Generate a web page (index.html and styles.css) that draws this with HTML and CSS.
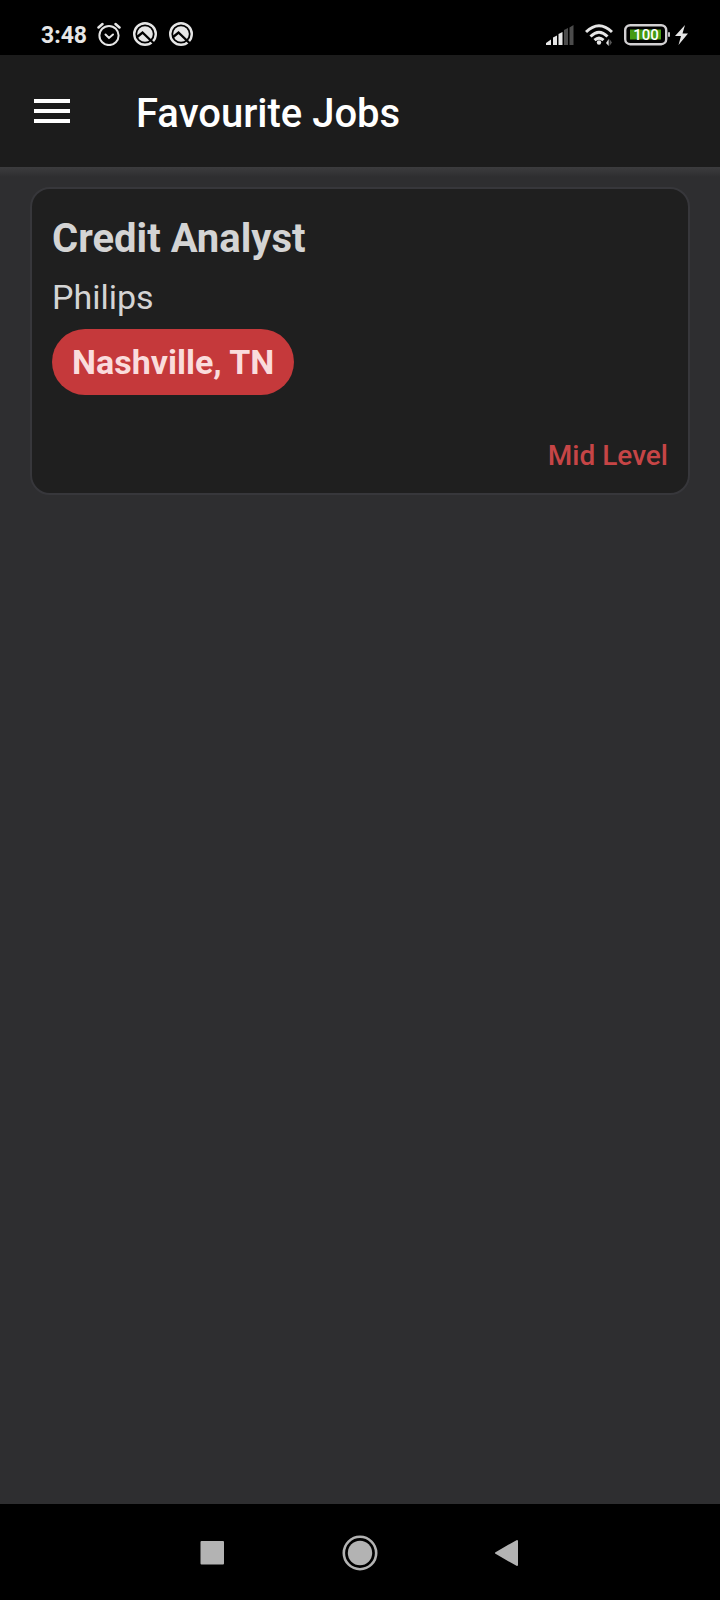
FILE: index.html
```html
<!DOCTYPE html>
<html lang="en">
<head>
<meta charset="utf-8">
<meta name="viewport" content="width=device-width, initial-scale=1">
<title>Favourite Jobs</title>
<link rel="stylesheet" href="styles.css">
</head>
<body>
<div class="screen">
  <div class="status">
    <div class="status-group">
      <span class="clock">3:48</span>
      <svg width="24" height="24" viewBox="0 0 24 24" fill="none" stroke="#e6e6e6" stroke-width="2" stroke-linecap="round"><circle cx="12" cy="13.500" r="9.600"/><path d="M8.500 12.500l3.500 3.500 4-3.500"/><path d="M1.500 5.500l4-3.500M22.500 5.500l-4-3.500" stroke-width="2.500"/></svg>
      <svg width="24" height="24" viewBox="0 0 24 24"><use href="#assist"/></svg>
      <svg width="24" height="24" viewBox="0 0 24 24"><g id="assist"><circle cx="12" cy="12" r="10.800" fill="none" stroke="#e6e6e6" stroke-width="2.400"/><circle cx="12" cy="12" r="7.800" fill="#e6e6e6"/><path d="M3.500 15.500L9.500 10.500 21.500 22" fill="none" stroke="#000" stroke-width="2.400"/></g></svg>
    </div>
    <div class="status-group status-right">
      <svg width="28" height="20" viewBox="0 0 28 20" fill="#e6e6e6"><path d="M0 20v-2l5-3.500V20zM7 12.500l4-2V20H7zM12.500 9l4-2v13h-4z"/><path d="M18 5l4-2v17h-4zM23.500 2.500L27.500 0v20h-4z" fill="#4c4c4c"/></svg>
      <svg width="28" height="22" viewBox="0 0 28 22" fill="none" stroke="#e6e6e6" stroke-width="3"><path d="M1 8Q14-4.500 27 8M5.500 12.500Q14 4 22.500 12.500M9.500 16.200Q14 12 18.500 16.200"/><circle cx="14" cy="18.500" r="2.200" fill="#e6e6e6" stroke="none"/><path d="M21 19l2.700-4v7z" fill="#e6e6e6" stroke="none"/><path d="M24.500 15v7l2.500-3.500z" fill="#555" stroke="none"/></svg>
      <svg class="battery" width="46" height="22" viewBox="0 0 46 22"><rect x="1.200" y="1.200" width="41" height="19" rx="5" fill="none" stroke="#d2d0d2" stroke-width="2.400"/><rect x="6" y="5.500" width="31" height="10" fill="#459a12"/><rect x="44" y="8" width="2" height="5" rx="1" fill="#c4c4c4"/><text x="22" y="16" text-anchor="middle" class="charge">100</text></svg>
      <svg class="bolt" width="14" height="20" viewBox="0 0 14 20" fill="#e6e6e6"><path d="M10 0L0 11h6L3.500 20 13 8.500H7.500z"/></svg>
    </div>
  </div>
  <header class="appbar">
    <button class="menu" type="button" aria-label="Open menu"><svg width="36" height="24" viewBox="0 0 36 24" fill="#fff"><path d="M0 0h36v4H0zM0 10h36v4H0zM0 20h36v4H0z"/></svg></button>
    <h1 class="title">Favourite Jobs</h1>
  </header>
  <main class="content">
    <article class="card">
      <h2 class="job">Credit Analyst</h2>
      <p class="company">Philips</p>
      <span class="place">Nashville, TN</span>
      <p class="level">Mid Level</p>
    </article>
  </main>
  <nav class="navbar">
    <button type="button" aria-label="Recent apps"><svg width="36" height="36" viewBox="0 0 36 36"><rect x="5.500" y="6" width="23.500" height="23.500" rx="1" fill="#b3b3b3"/></svg></button>
    <button type="button" aria-label="Home"><svg width="36" height="36" viewBox="0 0 36 36"><circle cx="18" cy="18" r="16.200" fill="none" stroke="#b3b3b3" stroke-width="2.600"/><circle cx="18" cy="18" r="12.200" fill="#b3b3b3"/></svg></button>
    <button type="button" aria-label="Back"><svg width="36" height="36" viewBox="0 0 36 36"><path d="M7 18L28 6v24z" fill="#b3b3b3" stroke="#b3b3b3" stroke-width="2" stroke-linejoin="round"/></svg></button>
  </nav>
</div>
</body>
</html>
```
FILE: styles.css
```css
* { box-sizing: border-box; }

body {
  margin: 0;
  background: #2e2e30;
  font-family: Roboto, "Liberation Sans", sans-serif;
}

h1, h2, p { margin: 0; }
svg { display: block; }
button { padding: 0; border: 0; background: none; }

.screen {
  display: flex;
  flex-direction: column;
  min-height: 100vh;
}

.status {
  display: flex;
  justify-content: space-between;
  padding: 14px 31px 0 41px;
  height: 55px;
  background: #000;
}

.status-group {
  display: flex;
  align-items: center;
  gap: 12px;
  height: 40px;
}

.status-right { gap: 11px; height: 42px; }

.clock {
  margin-right: -2px;
  padding-top: 3px;
  color: #e6e6e6;
  font-size: 23px;
  font-weight: 700;
  line-height: 40px;
}

.bolt { margin-left: -6px; }

.charge {
  fill: #fff;
  font-size: 15px;
  font-weight: 500;
}

.appbar {
  display: flex;
  align-items: center;
  gap: 66px;
  height: 112px;
  padding: 0 34px;
  background: #1c1c1c;
}

.title {
  color: #fff;
  font-size: 40px;
  font-weight: 500;
  line-height: 48px;
  padding-top: 6px;
}

.content {
  flex: 1;
  padding: 20px 30px;
  background: linear-gradient(#3c3c3e, #2e2e30 10px);
}

.card {
  display: flex;
  flex-direction: column;
  align-items: flex-start;
  padding: 26px 20px 17px;
  border: 2px solid #37373b;
  border-radius: 20px;
  background: #1f1f1f;
  color: #d4d4d4;
}

.job {
  font-size: 40px;
  font-weight: 700;
  line-height: 48px;
}

.company {
  margin-top: 14px;
  font-size: 34px;
  line-height: 40px;
}

.place {
  margin-top: 12px;
  padding: 0 20px;
  border-radius: 33px;
  background: #c5393b;
  color: #fadcdc;
  font-size: 34px;
  font-weight: 700;
  line-height: 66px;
}

.level {
  align-self: flex-end;
  margin-top: 41px;
  color: #c64546;
  font-size: 28px;
  font-weight: 500;
  line-height: 40px;
}

.navbar {
  display: flex;
  justify-content: center;
  align-items: center;
  gap: 111px;
  height: 96px;
  padding-top: 1px;
  background: #000;
}
```
